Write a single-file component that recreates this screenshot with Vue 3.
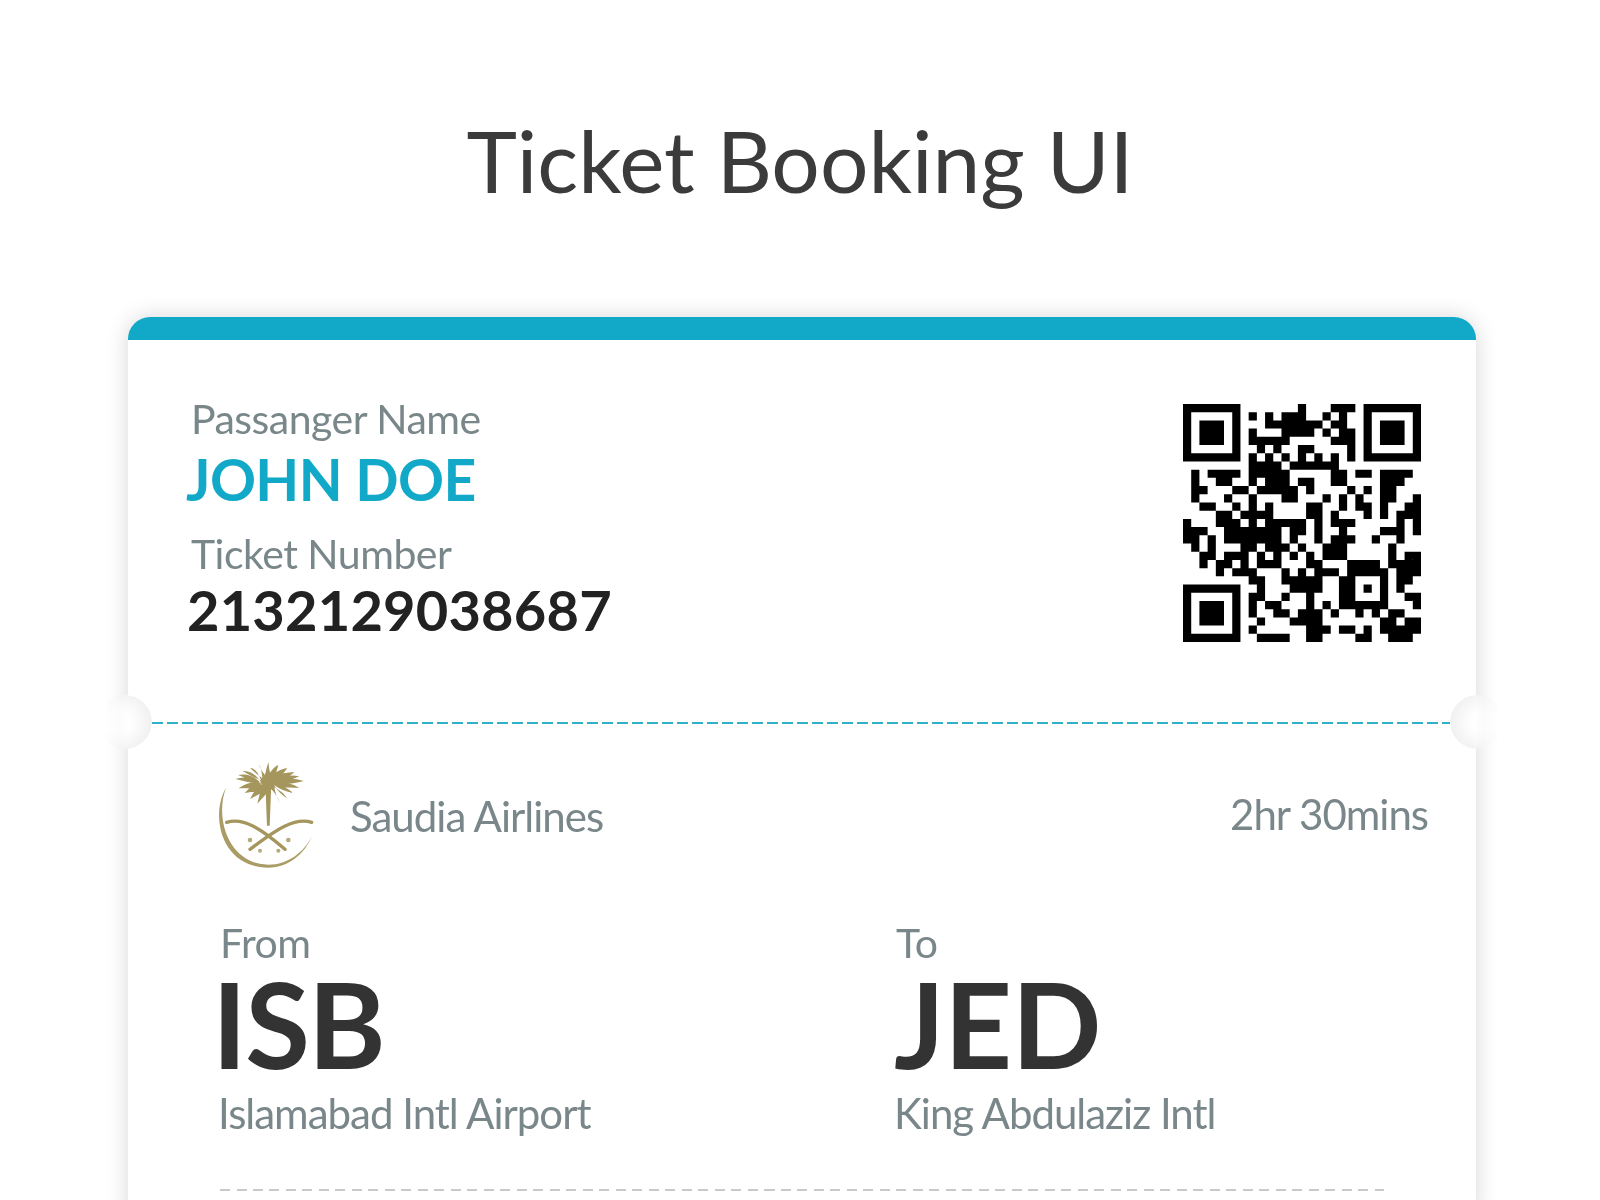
<script setup>
const rows = [
  '1111111.......1...111.1111111',
  '1.....1.1.1.111..1.1..1.....1',
  '1.111.1...1111111.11..1.111.1',
  '1.111.1.1...1111.1.11.1.111.1',
  '1.111.1.11111.....111.1.111.1',
  '1.....1..1.1..11....1.1.....1',
  '1111111.1.1.1.1.1.1.1.1111111',
  '........1111.111111..........',
  '.1.1111.11111.....11.11.1111.',
  '.1..11..1.111.11..11....111..',
  '.11...11.11111.1....1.1.11...',
  '.1...1..1...11...1.1.1..11..1',
  '..11..1.1.1....11..1.11.1..11',
  '....11.1111....11.1...1.1.111',
  '1...111.1.11111.1.111.....1.1',
  '111..1111111.11.1..1....111.1',
  '11.1.1111111.1..1.111..1..1..',
  '.1.1...11.111.1..111.....1...',
  '..11.111.1.1.1.1.111.....1.11',
  '..1.11.1.111...11...1111.1111',
  '....1.111...1.1.111.11111.111',
  '........11..11111..11...1.11.',
  '1111111..1...1111..11.1.1.1..',
  '1.....1.11..1..1...11...1..11',
  '1.111.1.1.11...1.1.111111...1',
  '1.111.1.1..11.111.1..1.1.11..',
  '1.111.1..1...1111.......11.11',
  '1.....1.1......111.11.1.11111',
  '1111111..1111..11....11..111.'
]
let qr = ''
rows.forEach((r, y) => {
  for (let x = 0; x < 29; x++) if (r[x] === '1') qr += `M${x} ${y}h1v1h-1z`
})
const tips = [[106,82],[114,70],[128,58],[150,48],[176,40],[205,32],[235,40],[262,50],[284,62],[298,74],[312,88],[116,110],[134,124],[150,142],[172,156],[240,154],[262,140],[280,124],[298,108]]
const fronds = tips.map(([x, y]) => {
  const mx = (205 + x) / 2, my = (96 + y) / 2
  return `M188 100 Q${mx - 4} ${my - 22} ${x} ${y} Q${mx + 4} ${my + 8} 222 100Z`
}).join('')
</script>

<template>
  <main class="page">
    <h1 class="title">Ticket Booking UI</h1>
    <section class="ticket">
      <div class="bar"></div>
      <div class="top">
        <div class="who">
          <div class="label indent">Passanger Name</div>
          <div class="name">JOHN DOE</div>
          <div class="label indent">Ticket Number</div>
          <div class="number">2132129038687</div>
        </div>
        <svg class="qr" viewBox="0 0 29 29"><path :d="qr" fill="#000" /></svg>
      </div>
      <div class="tear">
        <span class="notch left"></span>
        <span class="dash"></span>
        <span class="notch right"></span>
      </div>
      <div class="airline">
        <div class="brand">
          <svg class="logo" viewBox="45 25 300 330">
            <path d="M78 108C30 190 62 348 205 348C265 348 315 305 335 255C312 300 265 339 205 339C90 339 42 205 78 108Z" fill="#a99c66" />
            <path :d="fronds" fill="#a4965c" />
            <path d="M196 95h18l-5 127h-8Z" fill="#a4965c" />
            <g fill="none" stroke="#a4965c" stroke-linecap="round">
              <path d="M80 212C130 196 185 232 255 293" stroke-width="10" />
              <path d="M335 212C285 196 230 232 150 293" stroke-width="10" />
            </g>
            <g fill="#b5aa7c">
              <circle cx="150" cy="265" r="7" /><circle cx="265" cy="265" r="7" />
              <circle cx="180" cy="297" r="6" /><circle cx="235" cy="297" r="6" />
            </g>
          </svg>
          <span class="carrier">Saudia Airlines</span>
        </div>
        <span class="duration">2hr 30mins</span>
      </div>
      <div class="route">
        <div class="stop">
          <div class="label">From</div>
          <div class="code isb">ISB</div>
          <div class="airport">Islamabad Intl Airport</div>
        </div>
        <div class="stop">
          <div class="label">To</div>
          <div class="code jed">JED</div>
          <div class="airport">King Abdulaziz Intl</div>
        </div>
      </div>
      <div class="rule"></div>
    </section>
  </main>
</template>

<style>
html, body { margin: 0; background: #fff; }
</style>

<style scoped>
.page {
  height: 1200px;
  overflow: hidden;
  background: #fff;
  font-family: Lato, "Open Sans", sans-serif;
  filter: blur(0.6px);
}
.title {
  margin: 0;
  padding: 109px 0 0 0;
  height: 317px;
  box-sizing: border-box;
  text-align: center;
  font-size: 85.6px;
  line-height: 102px;
  font-weight: 400;
  color: #3b3b3b;
}
.ticket {
  margin: 0 124px 0 128px;
  height: 900px;
  background: #fff;
  border-radius: 22px 22px 0 0;
  box-shadow: 0 0 22px rgba(0, 0, 0, 0.16);
}
.bar {
  height: 23px;
  background: #12a9c8;
  border-radius: 22px 22px 0 0;
}
.top {
  height: 382px;
  display: flex;
  justify-content: space-between;
  padding: 64px 55px 0 58px;
  box-sizing: border-box;
}
.label {
  font-size: 41px;
  line-height: 46px;
  letter-spacing: -0.5px;
  color: #7a878a;
}
.indent { padding-left: 5px; }
.who { margin-top: -8px; }
.name {
  font-size: 57px;
  line-height: 74px;
  font-weight: 700;
  letter-spacing: -0.6px;
  color: #12a9c8;
  margin-bottom: 15px;
}
.number {
  font-size: 56px;
  line-height: 68px;
  font-weight: 700;
  letter-spacing: 0.2px;
  color: #222;
  padding-left: 1px;
  margin-top: -1px;
}
.qr {
  width: 238px;
  height: 238px;
  flex: none;
}
.tear {
  position: relative;
  height: 2px;
  display: flex;
}
.dash {
  display: block;
  margin: 0 26px 0 24px;
  flex: 1;
  height: 2px;
  background: repeating-linear-gradient(90deg, #2eb1c9 0 11px, transparent 11px 15px);
}
.notch {
  position: absolute;
  top: -27px;
  width: 54px;
  height: 54px;
  border-radius: 50%;
}
.notch.left {
  left: -30px;
  background: radial-gradient(circle at 40% 50%, #fff 0 25%, #f5f5f5 60%, #e9e9e9 100%);
  mask-image: linear-gradient(90deg, transparent 10%, #000 55%);
}
.notch.right {
  right: -28px;
  background: radial-gradient(circle at 60% 50%, #fff 0 25%, #f5f5f5 60%, #e9e9e9 100%);
  mask-image: linear-gradient(270deg, transparent 10%, #000 55%);
}
.airline {
  height: 171px;
  display: flex;
  justify-content: space-between;
  align-items: center;
  padding: 8px 48px 0 87px;
  box-sizing: border-box;
}
.brand {
  display: flex;
  align-items: center;
  gap: 35px;
}
.logo {
  width: 100px;
  height: 110px;
  flex: none;
  margin-top: 2px;
}
.carrier, .duration {
  font-size: 42px;
  letter-spacing: -1px;
  color: #7a878a;
}
.carrier { margin-top: 4px; }
.route {
  display: grid;
  grid-template-columns: 676px 1fr;
  padding: 21px 0 0 92px;
}
.stop .label { line-height: 46px; margin-top: 4px; }
.code {
  font-size: 118px;
  line-height: 112px;
  font-weight: 700;
  letter-spacing: -1px;
  color: #333;
  margin-top: 2px;
}
.code.isb { margin-left: -8px; letter-spacing: -1.8px; }
.code.jed { margin-left: -2px; letter-spacing: -0.4px; }
.airport {
  font-size: 42px;
  line-height: 58px;
  letter-spacing: -1px;
  color: #7a878a;
  margin: 4px 0 0 -2px;
}
.rule {
  margin: 47px 92px 0 92px;
  height: 2px;
  background: repeating-linear-gradient(90deg, #c9c9c9 0 10px, transparent 10px 16.5px);
}
</style>
